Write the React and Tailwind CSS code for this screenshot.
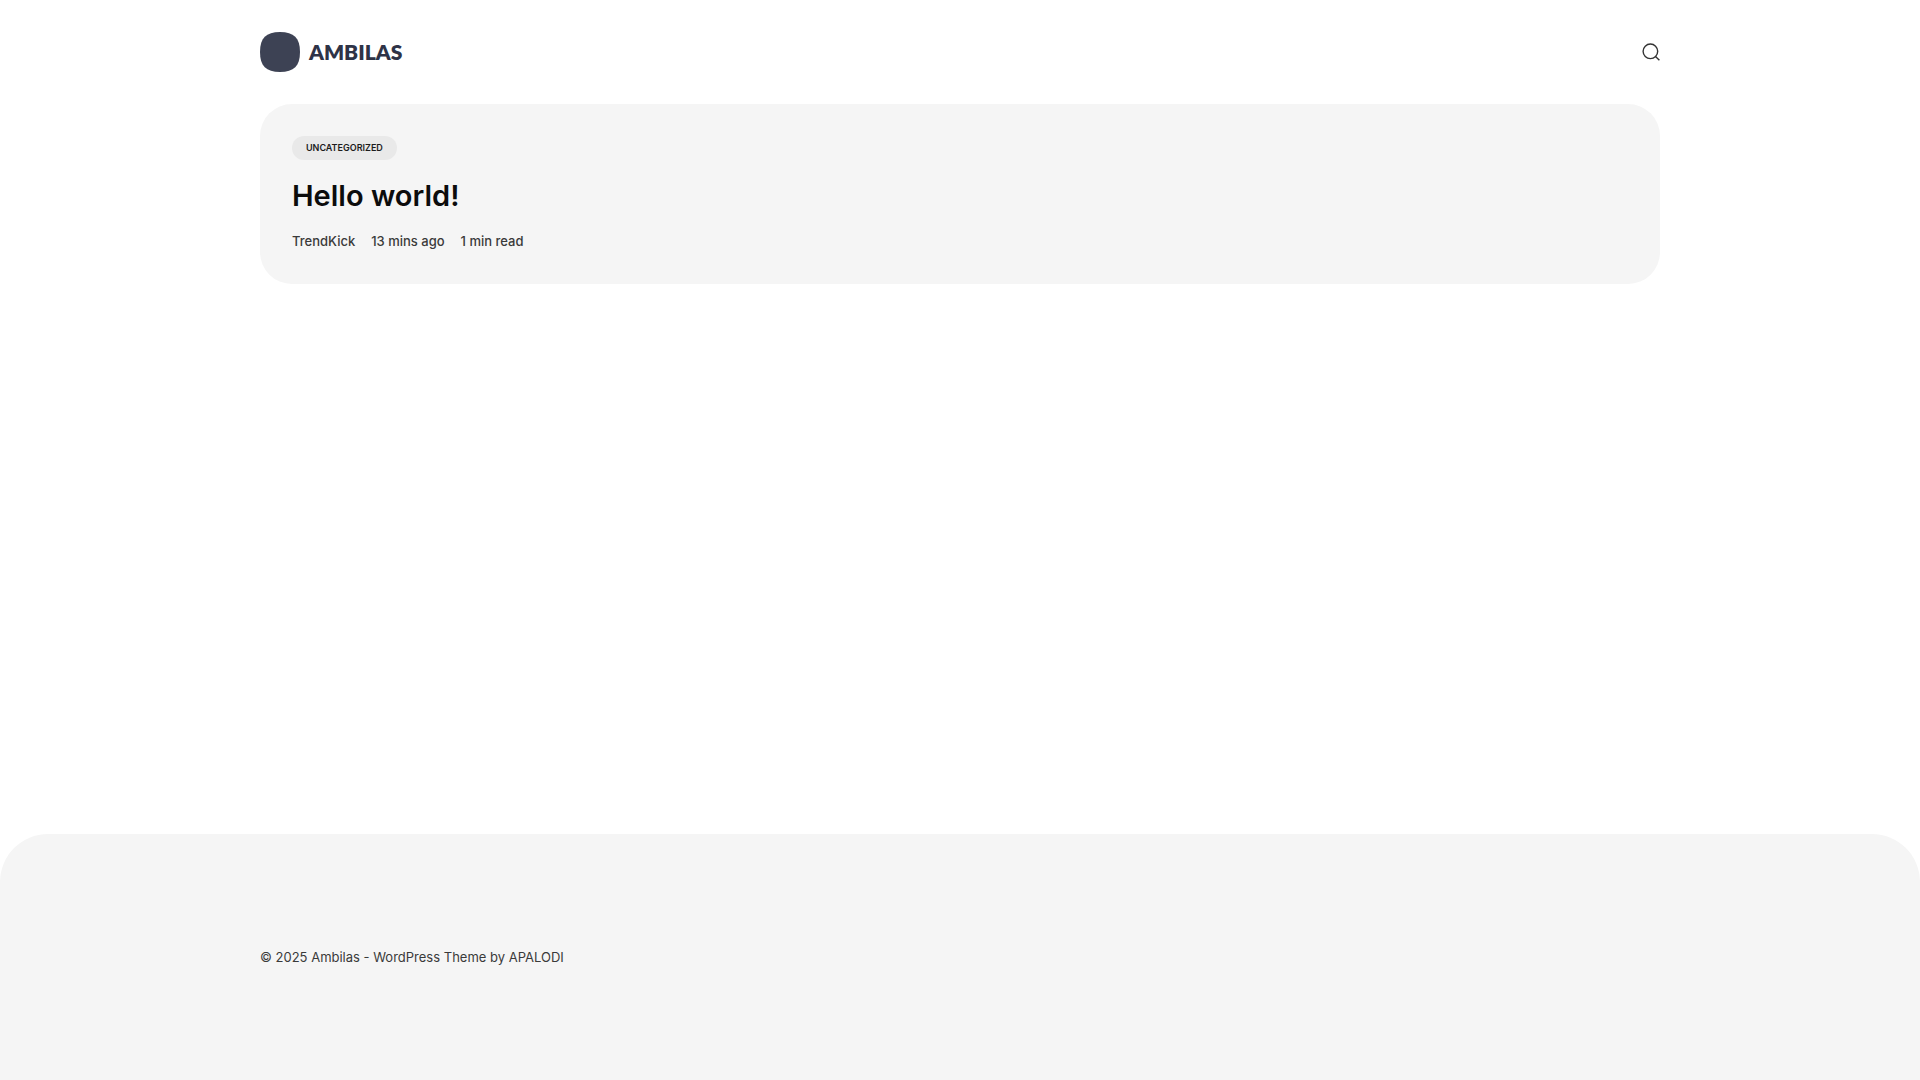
export default function App() {
  return (
    <div className="flex min-h-screen flex-col bg-white font-['Inter',sans-serif] text-[#3a3a3a]">
      <header className="mx-auto flex h-[104px] w-full max-w-[1400px] items-center justify-between">
        <a href="#" aria-label="Ambilas" className="flex items-center gap-[9px]">
          <svg className="size-10" viewBox="0 0 40 40" aria-hidden="true">
            <path d="M20 0C34 0 40 6 40 20S34 40 20 40 0 34 0 20 6 0 20 0Z" fill="#3d4254" />
          </svg>
          <span className="font-['Lato',sans-serif] text-[21px] leading-6 font-extrabold text-[#2e3347]">AMBILAS</span>
        </a>
        <button type="button" aria-label="Search" className="text-[#333]">
          <svg className="size-[18px]" viewBox="0 0 18 18" fill="none" stroke="currentColor" strokeWidth="1.4" aria-hidden="true">
            <circle cx="8.4" cy="8.3" r="7.3" />
            <path d="M13.5 13.4L17.4 17.3" />
          </svg>
        </button>
      </header>
      <main className="mx-auto w-full max-w-[1400px] grow">
        <article className="flex flex-col items-start rounded-[32px] bg-[#f5f5f5] p-8">
          <a href="#" className="rounded-full bg-[#e9e9e9] px-3.5 text-[9px] leading-6 font-semibold text-[#1c1c1c]">UNCATEGORIZED</a>
          <h2 className="mt-4 text-[29px] leading-10 font-semibold text-[#0c0c0c]">
            <a href="#">Hello world!</a>
          </h2>
          <div className="mt-3.5 flex gap-4 text-[13px] leading-[22px] font-medium">
            <a href="#">TrendKick</a>
            <span>13 mins ago</span>
            <span>1 min read</span>
          </div>
        </article>
      </main>
      <footer className="rounded-t-[48px] bg-[#f5f5f5] py-28">
        <p className="mx-auto w-full max-w-[1400px] text-[13px] leading-[22px]">
          © 2025 Ambilas - WordPress Theme by <a href="#">APALODI</a>
        </p>
      </footer>
    </div>
  );
}
